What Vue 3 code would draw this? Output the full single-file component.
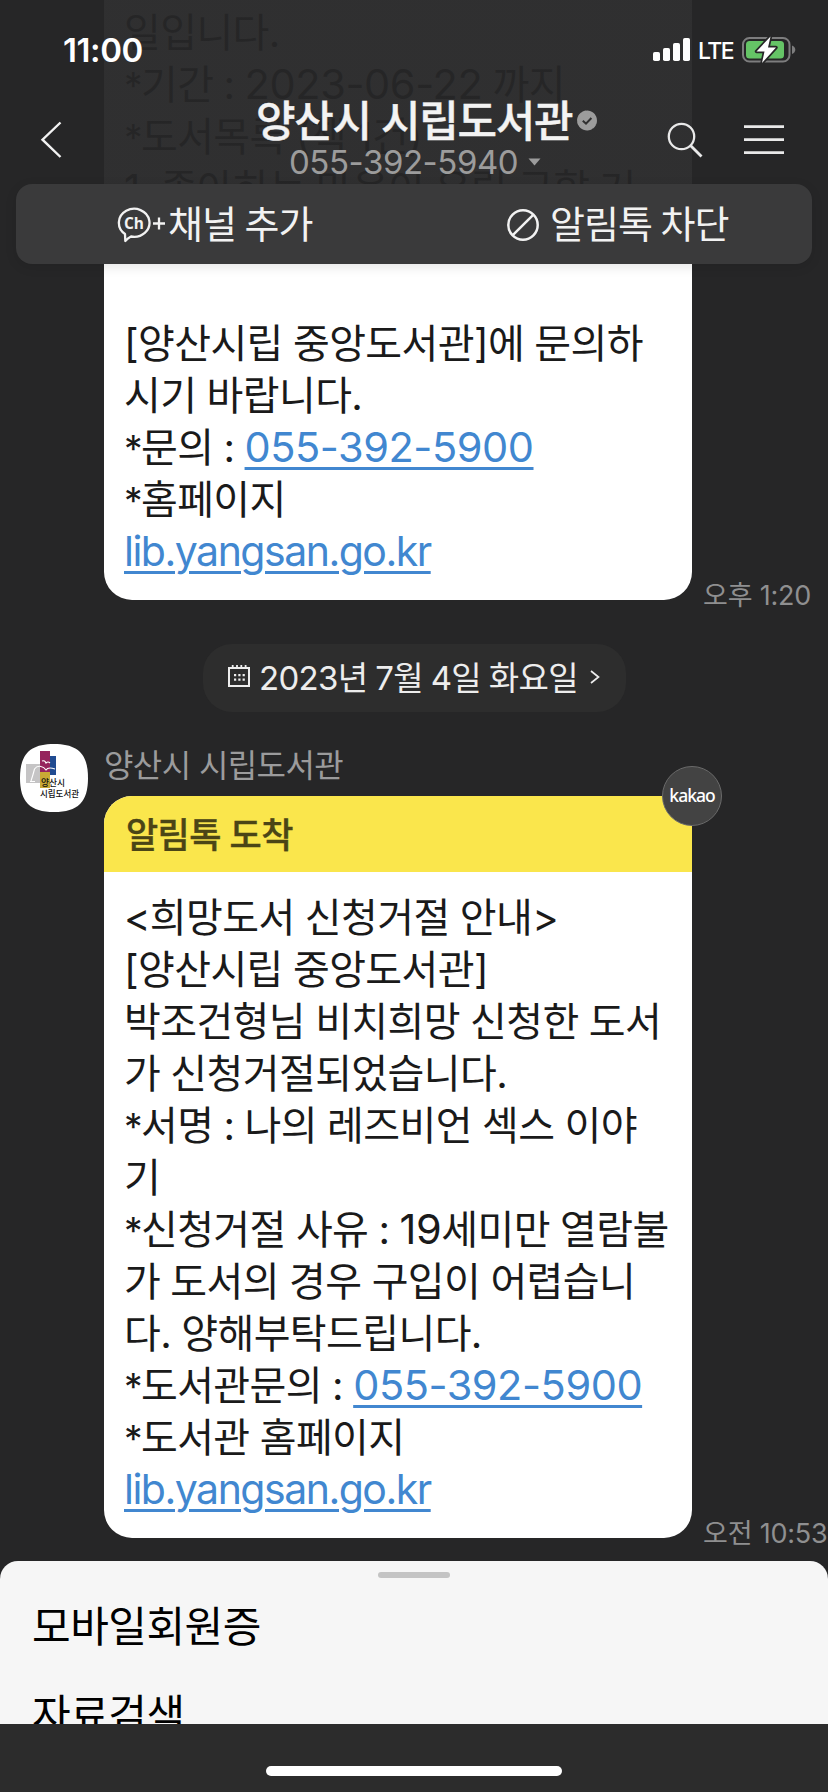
<script setup>
const earlier = [
  { text: '일입니다.' },
  { star: '*', text: '기간 : ', num: '2023-06-22', rest: ' 까지' },
  { star: '*', text: '도서목록 (책 1건)' },
  { text: '1. 좋아하는 마음이 우릴 구할 거' },
]
const contact = [
  { text: '[양산시립 중앙도서관]에 문의하' },
  { text: '시기 바랍니다.' },
  { star: '*', text: '문의 : ', link: '055-392-5900' },
  { star: '*', text: '홈페이지' },
  { url: 'lib.yangsan.go.kr' },
]
const notice = [
  { text: '<희망도서 신청거절 안내>' },
  { text: '[양산시립 중앙도서관]' },
  { text: '박조건형님 비치희망 신청한 도서' },
  { text: '가 신청거절되었습니다.' },
  { star: '*', text: '서명 : 나의 레즈비언 섹스 이야' },
  { text: '기' },
  { star: '*', text: '신청거절 사유 : ', num: '19', rest: '세미만 열람불' },
  { text: '가 도서의 경우 구입이 어렵습니' },
  { text: '다. 양해부탁드립니다.' },
  { star: '*', text: '도서관문의 : ', link: '055-392-5900' },
  { star: '*', text: '도서관 홈페이지' },
  { url: 'lib.yangsan.go.kr' },
]
</script>

<template>
  <div class="screen">
    <main class="chat">
      <div class="message first">
        <div class="bubble">
          <div class="earlier">
            <p v-for="(line, i) in earlier" :key="i" class="line"><span v-if="line.star" class="star">{{ line.star }}</span>{{ line.text }}<span v-if="line.num" class="num">{{ line.num }}</span>{{ line.rest }}</p>
          </div>
          <p v-for="(line, i) in contact" :key="i" class="line"><span v-if="line.star" class="star">{{ line.star }}</span>{{ line.text }}<a v-if="line.link" class="phone">{{ line.link }}</a><a v-if="line.url" class="url">{{ line.url }}</a></p>
        </div>
        <span class="time">오후 1:20</span>
      </div>

      <div class="date-pill">
        <svg class="cal" width="22" height="24" viewBox="0 0 22 24" fill="none" stroke="#ededed">
          <path d="M1 4H21V22H1Z" stroke-width="2" />
          <path d="M4.7 1V4M9 1V4M13.3 1V4M17.6 1V4" stroke-width="1.8" />
          <path d="M6 11.2H17M6 15.6H17" stroke-width="2.2" stroke-dasharray="2.2 2.1" />
        </svg>
        <span class="date-text">2023년 7월 4일 화요일</span>
        <svg class="date-chev" width="10" height="14" viewBox="0 0 10 14" fill="none" stroke="#ededed" stroke-width="1.7">
          <path d="M1 1L8.500 7L1 13" />
        </svg>
      </div>

      <div class="row">
        <svg class="avatar" width="68" height="68" viewBox="0 0 68 68">
          <path d="M34 0C58 0 68 10 68 34S58 68 34 68S0 58 0 34S10 0 34 0Z" fill="#fff" />
          <rect x="6" y="20" width="14" height="19" fill="#c5c4c5" />
          <rect x="20" y="7" width="10" height="21" fill="#95245d" />
          <rect x="30" y="12" width="6" height="19" fill="#204b91" />
          <rect x="20" y="28" width="10" height="16" fill="#c9aa35" />
          <path d="M10 37.500H15M11 37Q13 31 14.500 25Q17 21.500 21 22.500Q24 23 26 26Q28 22.500 35 25M22 17Q25 16 26 19Q28 17 30 19" fill="none" stroke="#fff" stroke-width="1.1" />
          <text x="21" y="41.500" class="logo-text" textLength="24" lengthAdjust="spacingAndGlyphs">양산시</text>
          <text x="20" y="52.500" class="logo-text" textLength="39" lengthAdjust="spacingAndGlyphs">시립도서관</text>
        </svg>
        <div class="column">
          <span class="sender">양산시 시립도서관</span>
          <div class="message">
            <div class="bubble card">
              <h2 class="card-title">알림톡 도착</h2>
              <div class="card-body">
                <p v-for="(line, i) in notice" :key="i" class="line"><span v-if="line.star" class="star">{{ line.star }}</span>{{ line.text }}<span v-if="line.num" class="num">{{ line.num }}</span>{{ line.rest }}<a v-if="line.link" class="phone">{{ line.link }}</a><a v-if="line.url" class="url">{{ line.url }}</a></p>
              </div>
              <span class="kakao">kakao</span>
            </div>
            <span class="time">오전 10:53</span>
          </div>
        </div>
      </div>
    </main>

    <header class="top">
      <div class="status">
        <span class="clock">11:00</span>
        <div class="status-right">
          <svg width="38" height="24" viewBox="0 0 38 24" fill="#fff">
            <rect x="0" y="14" width="7" height="9" rx="1.800" />
            <rect x="10" y="10" width="7" height="13" rx="1.800" />
            <rect x="20" y="5" width="7" height="18" rx="1.800" />
            <rect x="30" y="0" width="7" height="23" rx="1.800" />
          </svg>
          <span class="lte">LTE</span>
          <svg width="54" height="28" viewBox="0 0 54 28">
            <rect x="1" y="2" width="46.500" height="23.500" rx="6.500" fill="none" stroke="#7d7d7e" stroke-width="2" />
            <rect x="4" y="5" width="38" height="17.500" rx="3.500" fill="#65c466" />
            <path d="M50 9.500Q53.300 11 53.300 13.700T50 18Z" fill="#7d7d7e" />
            <path d="M28.500 .5L14.500 15.500H22.500L20 27L34 11.500H26Z" fill="#fff" stroke="#262627" stroke-width="3.400" stroke-linejoin="round" paint-order="stroke" />
          </svg>
        </div>
      </div>

      <div class="nav">
        <svg class="back" width="22" height="38" viewBox="0 0 22 38" fill="none" stroke="#f2f2f2" stroke-width="2.400">
          <path d="M20.500 1.500L2.500 18.700L20.500 36" />
        </svg>
        <div class="names">
          <div class="title-row">
            <h1 class="title">양산시 시립도서관</h1>
            <svg class="verified" width="20" height="21" viewBox="0 0 20 21">
              <circle cx="10" cy="10.500" r="8.600" fill="#9c9c9c" />
              <circle cx="10" cy="10.500" r="8.600" fill="none" stroke="#9c9c9c" stroke-width="2.800" stroke-dasharray="3 1.500" stroke-linecap="round" />
              <path d="M5.800 10.700L9 13.700L14.400 8" fill="none" stroke="#303030" stroke-width="2" />
            </svg>
          </div>
          <div class="number-row">
            <span class="number">055-392-5940</span>
            <svg width="13" height="8" viewBox="0 0 13 8"><path d="M.5 .5H12.500L6.500 7.500Z" fill="#9c9c9c" /></svg>
          </div>
        </div>
        <svg class="search" width="36" height="36" viewBox="0 0 36 36" fill="none" stroke="#e9e9e9" stroke-width="2.300">
          <circle cx="14.500" cy="14.500" r="12.700" />
          <path d="M23.500 23.500L34.500 34.500" stroke-width="2.800" />
        </svg>
        <svg class="menu" width="40" height="30" viewBox="0 0 40 30" stroke="#e9e9e9" stroke-width="2.800">
          <path d="M0 1.700H40M0 14.700H40M0 27.700H40" />
        </svg>
      </div>

      <div class="panel">
        <div class="action add">
          <svg width="49" height="36" viewBox="0 0 49 36" fill="none" stroke="#f2f2f2">
            <path d="M8.300 34L8 27A15.300 14 0 1 1 14 29.500Q11 31 8.300 34Z" stroke-width="2.300" stroke-linejoin="round" />
            <path d="M36 16.500H48M42 10.500V22.500" stroke-width="2.300" />
            <text x="7" y="22" class="ch" textLength="20" lengthAdjust="spacingAndGlyphs">Ch</text>
          </svg>
          <span class="action-text channel">채널 추가</span>
        </div>
        <div class="action block">
          <svg width="32" height="32" viewBox="0 0 32 32" fill="none" stroke="#f2f2f2" stroke-width="2.500">
            <circle cx="16" cy="16" r="14.700" />
            <path d="M5.800 26.200L26.200 5.800" />
          </svg>
          <span class="action-text">알림톡 차단</span>
        </div>
      </div>
    </header>

    <section class="sheet">
      <i class="grip"></i>
      <p class="option">모바일회원증</p>
      <p class="option">자료검색</p>
    </section>
    <footer class="home"><i class="home-bar"></i></footer>
  </div>
</template>

<style>
html, body { margin: 0; background: #262627; }
</style>

<style scoped>
.screen {
  position: relative;
  display: flex;
  flex-direction: column;
  width: 828px;
  height: 1792px;
  overflow: hidden;
  background: #262627;
  font-family: Inter, "Noto Sans CJK KR", sans-serif;
  font-kerning: normal;
}
p, h1, h2 { margin: 0; font-weight: 400; }
svg { display: block; flex: none; }
span, p, h1, h2 { white-space: pre; }

.chat { height: 1561px; flex: none; }
.message { display: flex; align-items: flex-end; }
.message.first { margin-left: 104px; height: 600px; }
.bubble {
  position: relative;
  box-sizing: border-box;
  flex: none;
  width: 588px;
  background: #fff;
  color: #1a1a1a;
  border-radius: 28px;
}
.first .bubble { height: 600px; padding: 5.5px 20px 0; border-radius: 0 0 28px 28px; }
.earlier { box-sizing: border-box; height: 312px; padding-top: 1.500px; }
.line {
  height: 52px;
  line-height: 52px;
  font-size: 40px;
  letter-spacing: -0.6px;
  word-spacing: -0.5px;
}
.star { font-size: 37px; line-height: 1; letter-spacing: -1.600px; }
.num { font-size: 41.500px; line-height: 1; letter-spacing: -0.4px; }
.phone, .url {
  color: #4187d0;
  text-decoration: underline;
  text-decoration-thickness: 3px;
  text-underline-offset: 5px;
  line-height: 1;
}
.phone { font-size: 41.500px; letter-spacing: -0.45px; }
.url { font-size: 41px; letter-spacing: -1.500px; }
.time {
  margin: 0 0 -12px 11px;
  font-size: 27px;
  line-height: 32px;
  letter-spacing: -0.2px;
  color: #8f8f90;
}
.date-pill {
  box-sizing: border-box;
  display: flex;
  align-items: center;
  width: 423px;
  height: 68px;
  margin: 44px 0 0 203px;
  padding-left: 25px;
  border-radius: 29px;
  background: #2d2d2d;
  color: #ededed;
}
.cal { margin-top: -4px; }
.date-text { width: 331px; margin-left: 9px; font-size: 33px; line-height: 40px; letter-spacing: -0.7px; word-spacing: -0.7px; }
.date-chev { margin-top: -2px; }
.row { display: flex; margin: 32px 0 0 20px; }
.avatar { margin-right: 16px; }
.logo-text { font: 500 9px "Noto Sans CJK KR", sans-serif; fill: #111; }
.column { width: 724px; }
.sender { display: block; height: 52px; font-size: 32px; line-height: 43px; letter-spacing: -0.6px; color: #9b9b9c; }
.card-title {
  height: 76px;
  padding-left: 22px;
  border-radius: 28px 0 0 0;
  background: #fae64c;
  color: #4b4516;
  font-size: 35px;
  line-height: 79px;
  font-weight: 500;
  letter-spacing: -0.6px;
  -webkit-text-stroke: .4px #4b4516;
}
.card { height: 742px; border-top-right-radius: 0; }
.card-body { padding: 19.500px 20px 0; }
.kakao {
  position: absolute;
  top: -30px;
  right: -30px;
  box-sizing: border-box;
  width: 60px;
  height: 60px;
  border: 1px solid #6a6a6a;
  border-radius: 50%;
  background: #434343;
  color: #fff;
  font: 500 17.500px/57px "Noto Sans", sans-serif;
  text-align: center;
  letter-spacing: -1px;
}

.top {
  position: absolute;
  inset: 0 0 auto 0;
  height: 224px;
  background: linear-gradient(rgba(38, 38, 39, .955) 200px, transparent 200px);
}
.status { display: flex; justify-content: space-between; height: 88px; padding: 0 32px 0 63px; }
.clock { padding-top: 30px; color: #fff; font-size: 33px; line-height: 40px; font-weight: 600; letter-spacing: -0.4px; }
.status-right { display: flex; padding-top: 38px; }
.status-right svg:last-child { margin: -2px 0 0 8px; }
.lte { margin: -2px 0 0 7px; width: 36px; color: #fff; font-size: 23px; line-height: 30px; font-weight: 500; letter-spacing: -1.600px; }
.nav { position: relative; display: flex; height: 96px; }
.back { margin: 33px 0 0 40px; }
.names { width: 334px; margin-left: 194px; }
.title-row { display: flex; height: 58px; }
.title { width: 317px; color: #f3f3f3; font-size: 43px; line-height: 67px; font-weight: 500; letter-spacing: -1.300px; -webkit-text-stroke: .4px #f3f3f3; }
.verified { margin: 22px 0 0 5px; }
.number-row { display: flex; align-items: center; gap: 8px; margin-left: 33px; height: 32px; }
.number { width: 231px; font-size: 33px; line-height: 32px; letter-spacing: -0.45px; color: #9c9c9c; }
.search { margin: 34px 0 0 77px; }
.menu { margin: 37px 0 0 41px; }
.panel {
  box-sizing: border-box;
  display: grid;
  grid-template-columns: 1fr 1fr;
  height: 80px;
  margin: 0 16px;
  border-radius: 16px;
  background: #3a3a3b;
  box-shadow: 0 3px 12px rgba(0, 0, 0, .1);
  color: #f2f2f2;
}
.action { display: flex; align-items: center; }
.add { padding-left: 101px; }
.block { padding-left: 93px; }
.ch { font: 700 16px "Open Sans", sans-serif; fill: #f2f2f2; stroke: none; }
.action-text { margin-left: 11px; font-size: 38px; line-height: 81px; letter-spacing: -1px; word-spacing: -1px; }
.channel { margin-left: 2px; }

.sheet {
  position: relative;
  height: 163px;
  flex: none;
  overflow: hidden;
  border-radius: 18px 18px 0 0;
  background: #f6f6f6;
  color: #000;
}
.grip { display: block; width: 72px; height: 6px; margin: 11px auto 0; border-radius: 3px; background: #c4c4c4; }
.option { height: 88px; padding-left: 32px; font-size: 42px; line-height: 98px; letter-spacing: -0.5px; }
.home { height: 68px; flex: none; background: #2c2c2c; overflow: hidden; }
.home-bar { display: block; width: 296px; height: 10px; margin: 42px auto 0; border-radius: 5px; background: #fff; }
</style>
